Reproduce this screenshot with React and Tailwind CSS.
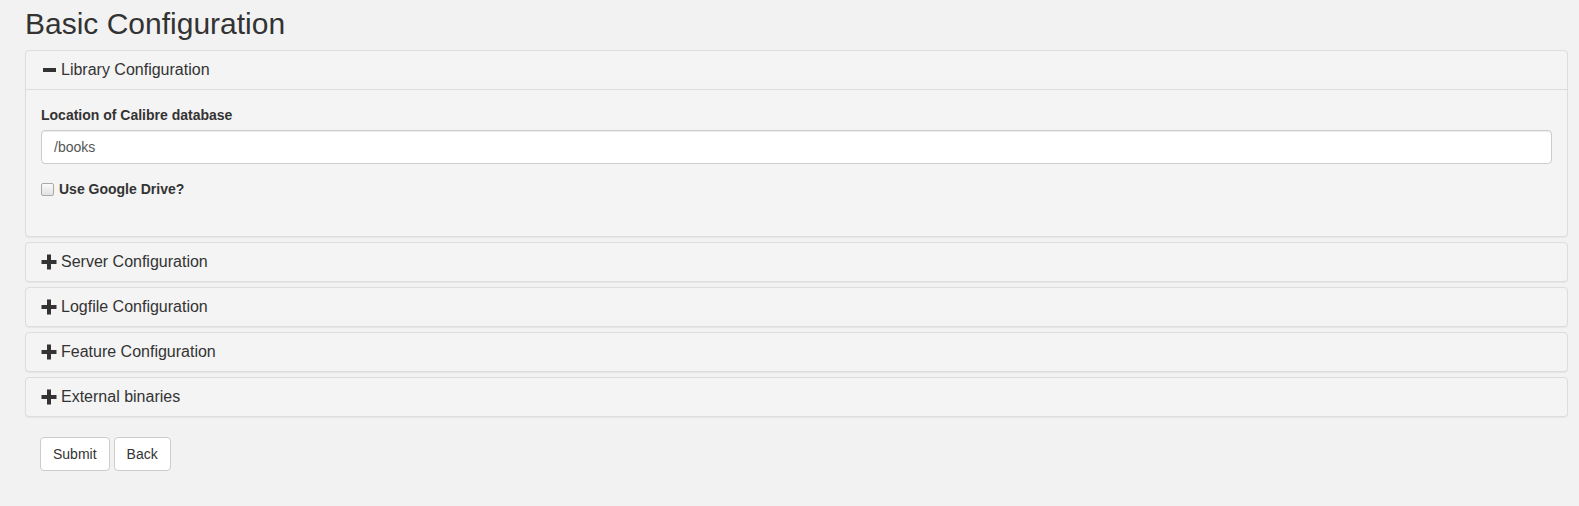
import React from 'react';

const font = { fontFamily: '"Liberation Sans", Arial, sans-serif' };

const PlusIcon = () => (
  <svg width="16" height="16" viewBox="0 0 16 16" className="mr-[4px] shrink-0" aria-hidden="true">
    <rect x="0.5" y="6" width="15" height="4" fill="#333" />
    <rect x="6" y="0.5" width="4" height="15" fill="#333" />
  </svg>
);

const MinusIcon = () => (
  <svg width="16" height="16" viewBox="0 0 16 16" className="mr-[4px] shrink-0" aria-hidden="true">
    <rect x="2" y="6" width="13" height="4" fill="#333" />
  </svg>
);

const PanelHeading = ({ open, title, bordered }) => (
  <div
    className={`flex items-center px-[15px] text-[16px] text-[#333] ${
      bordered ? 'h-[39px] border-b border-[#ddd]' : 'h-[38px]'
    }`}
  >
    {open ? <MinusIcon /> : <PlusIcon />}
    <span>{title}</span>
  </div>
);

const collapsed = ['Server Configuration', 'Logfile Configuration', 'Feature Configuration', 'External binaries'];

export default function App() {
  return (
    <div className="min-h-[506px] bg-[#f2f2f2] pl-[25px] pr-[11px] pt-[7px] text-[#333]" style={font}>
      <h2 className="text-[30px] leading-[33px] text-[#333] mb-[10px]">Basic Configuration</h2>

      <div className="flex flex-col gap-[5px]">
        <div className="bg-[#f4f4f4] border border-[#ddd] rounded-[4px] shadow-[0_1px_1px_rgba(0,0,0,0.05)]">
          <PanelHeading open bordered title="Library Configuration" />
          <div className="px-[15px] pt-[15px] pb-[37px]">
            <label className="block text-[14px] font-bold leading-[20px] mb-[5px]">
              Location of Calibre database
            </label>
            <input
              type="text"
              defaultValue="/books"
              className="block w-full h-[34px] px-[12px] text-[14px] text-[#555] bg-white border border-[#ccc] rounded-[4px] shadow-[inset_0_1px_1px_rgba(0,0,0,0.075)] outline-none"
              style={font}
            />
            <div className="flex items-center h-[20px] mt-[15px]">
              <span className="w-[13px] h-[13px] mr-[5px] border border-[#a9a9a9] rounded-[2px] bg-gradient-to-b from-[#fafafa] to-[#e2e2e2]" />
              <span className="text-[14px] font-bold">Use Google Drive?</span>
            </div>
          </div>
        </div>

        {collapsed.map((t) => (
          <div
            key={t}
            className="bg-[#f4f4f4] border border-[#ddd] rounded-[4px] shadow-[0_1px_1px_rgba(0,0,0,0.05)]"
          >
            <PanelHeading title={t} />
          </div>
        ))}
      </div>

      <div className="flex gap-[4px] mt-[20px] pl-[15px]">
        <button className="h-[34px] px-[12px] text-[14px] text-[#333] bg-white border border-[#ccc] rounded-[4px]" style={font}>
          Submit
        </button>
        <button className="h-[34px] px-[12px] text-[14px] text-[#333] bg-white border border-[#ccc] rounded-[4px]" style={font}>
          Back
        </button>
      </div>
    </div>
  );
}
